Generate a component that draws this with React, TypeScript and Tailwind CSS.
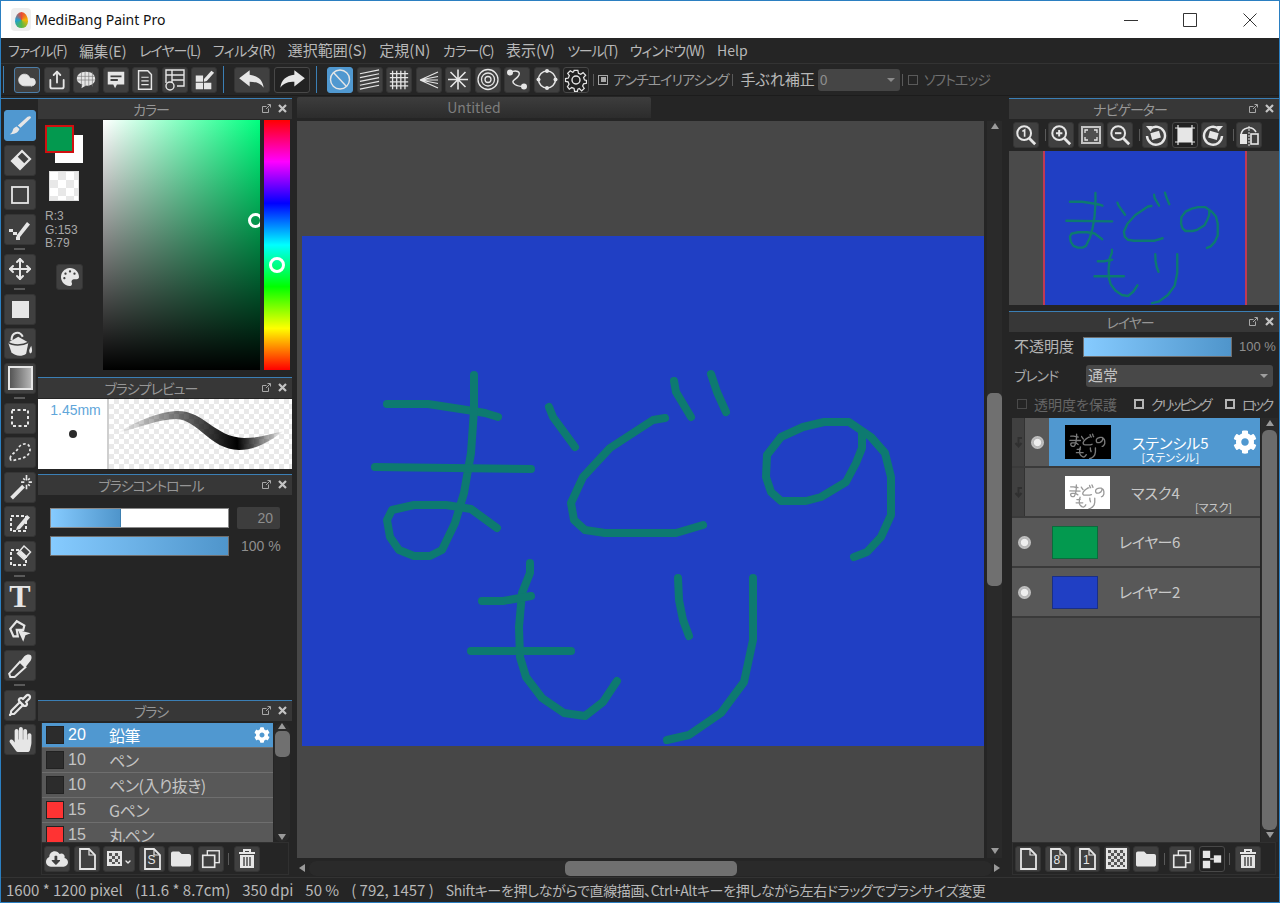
import React from 'react';
import { Cloud, Share, Move, Pipette, ChevronDown } from 'lucide-react';
import { FaHandPaper, FaPalette, FaCog, FaFolder, FaCloudDownloadAlt } from 'react-icons/fa';

const STROKES = [
  'M387 404 L428 404 L467 410 L485 413 L498 417',
  'M474 375 L474 410 L471 453 L464 493 L455 523 L442 550 L430 556 L414 556 L399 550 L390 537 L387 520 L392 510 L414 505 L446 505 L471 509 L497 528',
  'M375 467 L531 469',
  'M549 407 L553 417 L575 447',
  'M665 418 L653 420 L610 448 L583 477 L571 503 L574 520 L585 530 L605 533 L676 533 L703 525',
  'M674 381 L676 392 L691 417',
  'M711 374 L717 392 L726 412',
  'M862 432 L862 448 L856 463 L846 482 L821 497 L806 501 L781 501 L771 492 L766 477 L767 455 L781 437 L803 427 L824 422 L849 422 L871 437 L885 453 L891 477 L891 515 L881 537 L867 552 L854 557',
  'M530 563 L530 573 L522 593 L519 627 L520 657 L526 677 L542 698 L564 713 L585 716 L603 702 L617 681',
  'M482 601 L503 601 L531 596',
  'M471 651 L571 651',
  'M678 578 L679 600 L683 620 L689 636',
  'M753 578 L753 640 L744 682 L721 713 L689 735 L667 740',
];

// the painting on the canvas, reused for the navigator and the layer thumbnails
const Drawing = ({ className, width = 8 }: { className: string; width?: number }) => (
  <svg viewBox="302 236 682 510" preserveAspectRatio="none" className={className} fill="none" stroke="currentColor" strokeWidth={width} strokeLinecap="round" strokeLinejoin="round">
    {STROKES.map((d, i) => <path key={i} d={d} />)}
  </svg>
);

const I = ({ children, size = 20 }: { children: React.ReactNode; size?: number }) => (
  <svg viewBox="0 0 24 24" width={size} height={size} fill="none" stroke="currentColor" strokeWidth={2}>{children}</svg>
);

type Tone = 'normal' | 'active' | 'dark' | 'cloud';

const Btn = ({ children, tone = 'normal', className = 'w-[26px] h-[26px]' }: { children?: React.ReactNode; tone?: Tone; className?: string }) => {
  const tones = {
    normal: 'bg-[#404040] border-[#353535]',
    active: 'bg-[#5098d0] border-[#5098d0]',
    dark: 'bg-[#222222] border-[#484848]',
    cloud: 'bg-[#404040] border-[#4d7ea8]',
  };
  return <div className={`${className} ${tones[tone]} shrink-0 border rounded-[3px] flex items-center justify-center text-[#e6e6e6]`}>{children}</div>;
};

const VSep = ({ className = 'h-[12px] mx-[2px]' }: { className?: string }) => <div className={`${className} w-px shrink-0 bg-[#5a5a5a]`} />;

const PanelTitle = ({ title }: { title: string }) => (
  <div className="relative h-[21px] shrink-0 border-t border-[#3b7fb5] bg-[#373737] pr-[28px] flex items-center justify-center text-[14px] leading-none tracking-[-1px] text-[#969696]">
    {title}
    <div className="absolute right-[5px] top-[5px] flex items-center gap-[7px]">
      <svg viewBox="0 0 9 9" width="9" height="9" fill="none" stroke="#a8a8a8"><path d="M6.5 4.5V8.5H.5V2.5H4.5M4 5L8 1M5.5 .5H8.5V3.5" /></svg>
      <svg viewBox="0 0 9 9" width="9" height="9" fill="none" stroke="#c4c4c4" strokeWidth="2.2"><path d="M1 1L8 8M8 1L1 8" /></svg>
    </div>
  </div>
);

const Pencil = () => <path d="M9 17L19 5l3 2.5L12 19l-4 1z" fill="currentColor" stroke="none" />;
const DashBox = ({ w = 14 }: { w?: number }) => <rect x="3" y="6" width={w} height={w} strokeDasharray="3 2" />;

const TOOLS: (React.ReactNode | null)[] = [
  <I size={26}><path d="M21 3c1 0 1.500 1 .8 1.800L12.500 13.500 10 11.500 19 3.500zM9 12.500l2.500 2.300C10.500 18 7 20 2.500 19.500 5 18.500 5 17 5.500 15.500 6 13.800 7.500 13 9 12.500z" fill="currentColor" stroke="none" /></I>,
  <I size={24}><path d="M14 3l8 8-10 10-8-8z" strokeWidth="2.200" /><path d="M9 8l8 8-5 5-8-8z" fill="currentColor" stroke="none" /></I>,
  <I size={24}><rect x="4" y="4" width="16" height="16" strokeWidth="1.800" /></I>,
  <I size={24}><path d="M9 18L19 5l3 2.500L12 20l-4 1z" fill="currentColor" stroke="none" /><path d="M1 12h4v3H1zM5 15h4v3H5zM8 20h4v3H8z" fill="currentColor" stroke="none" /></I>,
  null,
  <Move size={24} strokeWidth={2} />,
  null,
  <div className="w-[17px] h-[17px] bg-[#e6e6e6]" />,
  <I size={27}><path d="M1 11L10 6 19 11 17 21C13 24 7 23 4 20z" fill="currentColor" stroke="none" /><path d="M1 11C5 14 14 14 19 11" stroke="#404040" strokeWidth="1.300" /><path d="M4 9C4 2 11 0 14 6" strokeWidth="1.800" /><path d="M21.500 14c-1 2-2.500 4-1.500 6s3.500 0 1.500-6z" fill="currentColor" stroke="none" /></I>,
  <div className="w-[25px] h-[24px] border-2 border-[#e6e6e6] bg-[linear-gradient(to_right,#555555,#b5b5b5)]" />,
  null,
  <I size={24}><rect x="4" y="4" width="16" height="16" strokeDasharray="3 2.500" /></I>,
  <I size={26}><path d="M3 17c0-4 5-5 7-9 2-4 6-5 9-4 3 2 3 7 0 10-3 3-7 3-10 4-3 1-6 2-6-1z" strokeDasharray="2.500 2" strokeWidth="1.600" /></I>,
  <I size={26}><path d="M3 21L14 10l2.500 2.500L5.500 23.500z" fill="currentColor" stroke="none" /><path d="M18 1v5M18 10v4M13 7.500h3M20 7.500h3M15 4l1.500 1.500M21 11l-1.500-1.500M21 4l-1.500 1.500" strokeWidth="1.500" /></I>,
  <I size={24}><DashBox w={15} /><Pencil /></I>,
  <I size={24}><DashBox w={15} /><path d="M16 2l6.500 6-6.500 7.500-6.500-6z" fill="#404040" strokeWidth="1.500" /><path d="M13 6.500l6.500 6-3 3-6.500-6z" fill="currentColor" stroke="none" /></I>,
  null,
  <span className="font-['Liberation_Serif',serif] font-bold text-[32px] leading-none">T</span>,
  <I size={26}><path d="M3 10l6-7 7 4-1 4H9l1 6-4 0z" /><path d="M10 11l12 3-5 2-2 6z" fill="currentColor" stroke="none" /></I>,
  <I size={26}><path d="M12 9L16 4C18 2 21 2 22 3s1 4-1 6L17 14z" fill="currentColor" stroke="none" /><path d="M12 9L2 20 3 23 7 23 17 14z" strokeWidth="1.800" /></I>,
  null,
  <Pipette size={24} strokeWidth={2.200} />,
  <FaHandPaper size={25} />,
];

const RULERS: React.ReactNode[] = [
  <I size={25}><circle cx="12" cy="12" r="9.500" strokeWidth="1.400" /><path d="M5.500 5L18.500 19" strokeWidth="1.400" /></I>,
  <I size={23}><path d="M2 6l20-4M2 10l20-4M2 14l20-4M2 18l20-4M2 22l20-4" strokeWidth="1.300" /></I>,
  <I size={22}><path d="M2 5h20M2 9.500h20M2 14h20M2 18.500h20M5 2v20M9.500 2v20M14 2v20M18.500 2v20" strokeWidth="1.400" /></I>,
  <I size={24}><path d="M3 12L21 4M3 12l18-3.500M3 12h18M3 12l18 3.500M3 12l18 8" strokeWidth="1.200" /></I>,
  <I size={25}><path d="M12 2v20M2 12h20M4.500 4.500l15 15M19.500 4.500l-15 15" strokeWidth="1.600" /></I>,
  <I size={25}><circle cx="12" cy="12" r="10" strokeWidth="1.300" /><circle cx="12" cy="12" r="6.500" strokeWidth="1.300" /><circle cx="12" cy="12" r="3" strokeWidth="1.300" /></I>,
  <I size={25}><path d="M5 5c6-3 12-1 8 4-3 4-8 4-3 8 3 2 6 2 9 2" strokeWidth="1.500" /><circle cx="5" cy="5" r="2" fill="currentColor" /><circle cx="19" cy="19" r="2" fill="currentColor" /></I>,
  <I size={25}><circle cx="12" cy="12" r="8.500" strokeWidth="1.500" /><circle cx="12" cy="3.500" r="2" fill="currentColor" stroke="none" /><circle cx="12" cy="20.500" r="2" fill="currentColor" stroke="none" /><circle cx="3.500" cy="12" r="2" fill="currentColor" stroke="none" /><circle cx="20.500" cy="12" r="2" fill="currentColor" stroke="none" /></I>,
  <I size={24}><circle cx="12" cy="12" r="4" strokeWidth="1.400" /><path d="M10 2h4l.6 3 2.400 1 2.500-1.700 2.700 2.700L20 9.500l1 2.500 2 .500v3l-3 .5-1 2.400 1.700 2.500-2.700 2.700L15.500 21l-1.500.6-.5 2.400h-3l-.5-3-2.500-1-2.500 1.700L3 19l1.700-2.500-1-2.500L1 13.500v-3l3-.5 1-2.500L3.300 5 6 2.300 8.500 4l1-.5z" strokeWidth="1.300" transform="scale(.95) translate(.6 .6)" /></I>,
];

const NAV: (React.ReactNode | 'sep')[] = [
  <I size={22}><circle cx="10" cy="10" r="7.500" strokeWidth="2.200" /><path d="M15.500 15.500L22 22" strokeWidth="3" /><path d="M8 8l2.500-1.500V14" strokeWidth="1.800" /></I>,
  'sep',
  <I size={22}><circle cx="10" cy="10" r="7.500" strokeWidth="2.200" /><path d="M15.500 15.500L22 22" strokeWidth="3" /><path d="M6.500 10h7M10 6.500v7" strokeWidth="2.200" /></I>,
  <div className="w-[20px] h-[18px] border-2 border-[#c4c4c4] bg-[#505050] flex items-center justify-center"><svg viewBox="0 0 14 12" width="14" height="12" fill="none" stroke="#e6e6e6" strokeWidth="1.300"><path d="M1 4V1h3M10 1h3v3M1 8v3h3M10 11h3V8" /></svg></div>,
  <I size={22}><circle cx="10" cy="10" r="7.500" strokeWidth="2.200" /><path d="M15.500 15.500L22 22" strokeWidth="3" /><path d="M6.500 10h7" strokeWidth="2.200" /></I>,
  'sep',
  <I size={24}><path d="M7 6a9 9 0 1 1-3 7" strokeWidth="2.400" /><path d="M3 3l6 0-1 6z" fill="currentColor" stroke="none" /><rect x="8" y="9" width="9" height="7" fill="currentColor" stroke="none" transform="rotate(-15 12 12)" /></I>,
  <I size={24}><rect x="5" y="5" width="14" height="14" fill="currentColor" stroke="none" /><path d="M2 5h20M2 19h20M5 2v20M19 2v20" strokeWidth="1.200" /></I>,
  <I size={24}><path d="M17 6a9 9 0 1 0 3 7" strokeWidth="2.400" /><path d="M21 3l-6 0 1 6z" fill="currentColor" stroke="none" /><rect x="7" y="9" width="9" height="7" fill="currentColor" stroke="none" transform="rotate(15 12 12)" /></I>,
  'sep',
  <I size={24}><path d="M4 12a8 8 0 0 1 15-3" strokeWidth="1.600" /><rect x="3" y="11" width="7" height="10" fill="currentColor" stroke="none" /><rect x="14" y="11" width="7" height="10" strokeWidth="1.600" /><path d="M12 3v20" strokeWidth="1" strokeDasharray="2 1" /></I>,
];

const Doc = ({ children }: { children?: React.ReactNode }) => (
  <div className="relative">
    <svg viewBox="0 0 24 24" width="24" height="24" fill="none" stroke="currentColor" strokeWidth="1.800"><path d="M5 2h9l6 6v14H5z" /><path d="M14 2v6h6" strokeWidth="1.200" /></svg>
    {children && <span className="absolute left-[8px] top-[6px] text-[12px] leading-[15px] font-['Liberation_Sans',sans-serif]">{children}</span>}
  </div>
);
const Copy = () => <I size={22}><rect x="8" y="3" width="13" height="13" strokeWidth="1.500" /><rect x="3" y="8" width="13" height="13" fill="#404040" strokeWidth="1.800" /></I>;
const Trash = () => <I size={24}><path d="M4 6h16M9 5V3h6v2" strokeWidth="2" /><path d="M5 8h14v13H5z" fill="currentColor" stroke="none" /><path d="M9 10v9M12 10v9M15 10v9" stroke="#404040" strokeWidth="1.400" /></I>;
const Checks = ({ size = 21 }: { size?: number }) => (
  <div style={{ width: size, height: size }} className="border-2 border-[#e6e6e6] bg-[conic-gradient(#dddddd_25%,#555555_0_50%,#dddddd_0_75%,#555555_0)] bg-[length:6px_6px]" />
);

const Eye = () => <div className="w-[13px] h-[13px] rounded-full bg-[radial-gradient(circle,#eeeeee_35%,#b5b5b5_45%,#d5d5d5_100%)]" />;

const Arrow = ({ dir }: { dir: 'up' | 'down' | 'left' | 'right' }) => {
  const d = { up: 'M4 0L8 6H0z', down: 'M0 0H8L4 6z', left: 'M6 0V8L0 4z', right: 'M0 0L6 4L0 8z' }[dir];
  return <svg viewBox="0 0 8 8" width="8" height="8" fill="#9a9a9a"><path d={d} /></svg>;
};

const BRUSHES = [
  { size: '20', name: '鉛筆', color: 'bg-[#2c2c2c]', active: true },
  { size: '10', name: 'ペン', color: 'bg-[#2c2c2c]' },
  { size: '10', name: 'ペン(入り抜き)', color: 'bg-[#2c2c2c]' },
  { size: '15', name: 'Gペン', color: 'bg-[#ff3333]' },
  { size: '15', name: '丸ペン', color: 'bg-[#ff3333]' },
];

const MENU = [
  { label: 'ファイル(F)', cls: 'tracking-[-1px]' },
  { label: '編集(E)', cls: 'text-[14.5px]' },
  { label: 'レイヤー(L)', cls: 'tracking-[-1px]' },
  { label: 'フィルタ(R)', cls: 'tracking-[-0.5px]' },
  { label: '選択範囲(S)', cls: 'text-[15px]' },
  { label: '定規(N)', cls: 'text-[15px]' },
  { label: 'カラー(C)', cls: 'tracking-[-1.1px]' },
  { label: '表示(V)', cls: 'text-[15px]' },
  { label: 'ツール(T)', cls: 'tracking-[-1.3px]' },
  { label: 'ウィンドウ(W)', cls: 'tracking-[-0.8px]' },
  { label: 'Help', cls: '' },
];
const CHECKER = 'bg-[conic-gradient(#e8e8e8_25%,#ffffff_0_50%,#e8e8e8_0_75%,#ffffff_0)] bg-[length:16px_16px]';
const SLIDER = 'bg-[linear-gradient(to_right,#86cbff,#4f95cb)]';

const ColorPanel = () => (
  <div className="h-[254px] shrink-0 flex bg-[#252525] pt-[1px]">
    <div className="w-[65px] shrink-0 pl-[7px] pt-[5px] flex flex-col">
      <div className="relative h-[38px] w-[38px]">
        <div className="absolute left-[10px] top-[10px] w-[28px] h-[28px] bg-white" />
        <div className="absolute left-0 top-0 w-[29px] h-[28px] bg-[#03994f] border-2 border-[#d01010]" />
      </div>
      <div className={`ml-[4px] mt-[8px] w-[30px] h-[30px] border border-[#dddddd] ${CHECKER} bg-[length:12px_12px]`} />
      <div className="mt-[9px] text-[12px] leading-[13.500px] text-[#a8a8a8] font-['Liberation_Sans',sans-serif]">R:3<br />G:153<br />B:79</div>
      <Btn className="ml-[11px] mt-[13px] w-[27px] h-[26px]"><FaPalette size={18} /></Btn>
    </div>
    <div className="relative w-[157px] h-[250px] shrink-0 overflow-hidden bg-[linear-gradient(to_top,#000000,transparent),linear-gradient(to_right,#ffffff,#00ff7f)]">
      <div className="absolute left-[145px] top-[93px] w-[15px] h-[15px] rounded-full border-[3px] border-white" />
    </div>
    <div className="relative ml-[4px] w-[26px] h-[250px] shrink-0 bg-[linear-gradient(to_bottom,#ff0000,#ff00ff,#0000ff,#00ffff,#00ff00,#ffff00,#ff0000)]">
      <div className="absolute left-[5px] top-[137px] w-[16px] h-[16px] rounded-full border-[3px] border-white" />
    </div>
  </div>
);

const BrushPreview = () => (
  <div className="h-[71px] shrink-0 flex bg-[#252525] pt-px">
    <div className="relative w-[71px] h-[70px] shrink-0 bg-white border-r-2 border-[#cfcfcf] flex flex-col items-center text-[14px] leading-none pt-[4px] pl-[6px] text-[#5fa6da] font-['Liberation_Sans',sans-serif]">
      1.45mm
      <div className="mt-[13px] mr-[5px] w-[8px] h-[8px] rounded-full bg-[#2a2a2a]" />
    </div>
    <div className="flex-1 h-[70px] bg-[conic-gradient(#e9e9e9_25%,#ffffff_0_50%,#e9e9e9_0_75%,#ffffff_0)] bg-[length:10px_10px]">
      <svg viewBox="110 399 182 70" width="182" height="70">
        <defs>
          <linearGradient id="brush" x1="0" x2="1" y1="0" y2="0">
            <stop offset="0" stopColor="#000" stopOpacity="0" />
            <stop offset=".3" stopColor="#000" stopOpacity=".45" />
            <stop offset=".72" stopColor="#000" stopOpacity="1" />
            <stop offset="1" stopColor="#000" stopOpacity="0" />
          </linearGradient>
        </defs>
        <path d="M118 433C140 420 160 412 177 411C205 410 215 437 245 438C260 438 272 434 285 431C272 440 258 450 240 450C210 449 200 420 177 419C160 419 140 428 118 433Z" fill="url(#brush)" />
      </svg>
    </div>
  </div>
);

const BrushControl = () => (
  <div className="flex-1 bg-[#252525] pt-[12px] pl-[12px] flex flex-col">
    <div className="flex items-center h-[22px]">
      <div className="relative w-[179px] h-[20px] bg-white border border-[#8a8a8a]">
        <div className={`w-[70px] h-full ${SLIDER} border-r border-[#3d7fb0]`} />
      </div>
      <div className="ml-[8px] w-[43px] h-[22px] rounded-[2px] bg-[#3d3d3d] flex items-center justify-end pr-[7px] text-[14px] text-[#8e8e8e] font-['Liberation_Sans',sans-serif]">20</div>
    </div>
    <div className="flex items-center h-[20px] mt-[7px]">
      <div className={`w-[179px] h-[20px] border border-[#6f6f6f] ${SLIDER}`} />
      <span className="ml-[12px] text-[14px] text-[#8e8e8e] font-['Liberation_Sans',sans-serif]">100 %</span>
    </div>
  </div>
);

const BrushList = () => (
  <div className="h-[156px] shrink-0 bg-[#252525] flex flex-col">
    <div className="h-[121px] shrink-0 flex pl-[3px] pt-[2px] pr-[2px] overflow-hidden">
      <div className="w-[232px] h-[119px] overflow-hidden border-l border-[#333333] bg-[#4d4d4d]">
        {BRUSHES.map(b => (
          <div key={b.name} className={`h-[25px] flex items-center border-b border-[#6e6e6e] text-[16px] leading-none tracking-[-0.5px] ${b.active ? 'bg-[#5098d0] text-white' : 'bg-[#585858] text-[#c4c4c4]'}`}>
            <div className={`ml-[4px] w-[18px] h-[18px] border border-[#222222] ${b.color}`} />
            <span className="ml-[4px] w-[41px] font-['Liberation_Sans',sans-serif] tracking-normal">{b.size}</span>
            <span>{b.name}</span>
            {b.active && <span className="ml-auto mr-[3px]"><FaCog size={16} /></span>}
          </div>
        ))}
      </div>
      <div className="ml-px w-[16px] flex flex-col items-center justify-between bg-[#2a2a2a] rounded-full">
        <Arrow dir="up" />
        <div className="w-[15px] h-[26px] mb-auto rounded-[5px] bg-[#707070]" />
        <Arrow dir="down" />
      </div>
    </div>
    <div className="h-[33px] shrink-0 mx-[3px] border border-[#303030] flex items-center gap-[3.500px] pl-[2px]">
      <Btn><FaCloudDownloadAlt size={22} /></Btn>
      <Btn><Doc /></Btn>
      <Btn className="w-[32px] h-[26px]">
        <div className="flex items-end gap-[2px]"><Checks size={15} /><ChevronDown size={8} strokeWidth={4} /></div>
      </Btn>
      <Btn><Doc>S</Doc></Btn>
      <Btn><FaFolder size={20} /></Btn>
      <Btn><Copy /></Btn>
      <VSep className="h-[12px] mx-[1px]" />
      <Btn><Trash /></Btn>
    </div>
  </div>
);

const LayerRow = ({ name, sub, thumb, indent, active, gear }: { name: string; sub?: string; thumb: React.ReactNode; indent?: boolean; active?: boolean; gear?: boolean }) => (
  <div className="h-[50px] shrink-0 flex border-b-2 border-[#3a3a3a] bg-[#585858]">
    {indent ? (
      <>
        <div className="w-[13px] shrink-0 bg-[#404040] flex items-center justify-center border-r border-[#333333]">
          <svg viewBox="0 0 9 11" width="9" height="11" fill="none" stroke="#303030" strokeWidth="2"><path d="M8 1H4.500v7M1.500 6l3 3.500 3-3.500" /></svg>
        </div>
        {active ? (
          <div className="w-[24px] shrink-0 flex items-center justify-center"><Eye /></div>
        ) : (
          <div className="w-[24px] shrink-0" />
        )}
        <div className={`flex-1 flex items-center pl-[16px] ${active ? 'bg-[#5098d0]' : ''}`}>
          {thumb}
          <div className={`ml-[21px] pt-[12px] flex flex-col ${active ? 'items-center text-white' : 'text-[#c8c8c8]'} text-[15px] leading-[18px]`}>
            <span>{name}</span>
            {sub && <span className={`text-[11px] leading-[11px] ${active ? '' : 'ml-[64px]'}`}>{sub}</span>}
          </div>
          {gear && <span className="ml-auto mr-[3px] text-white"><FaCog size={24} /></span>}
        </div>
      </>
    ) : (
      <>
        <div className="w-[24px] shrink-0 flex items-center justify-center"><Eye /></div>
        <div className="ml-[16px]">{thumb}</div>
        <span className="ml-[21px] self-center text-[15px] tracking-[-0.5px] text-[#c8c8c8]">{name}</span>
      </>
    )}
  </div>
);

const LayerPanel = () => (
  <div className="flex-1 min-h-0 flex flex-col bg-[#252525]">
    <div className="h-[29px] shrink-0 flex items-center pl-[5px] text-[15px] text-[#b5b5b5]">
      <span className="w-[69px] whitespace-nowrap">不透明度</span>
      <div className={`w-[149px] h-[20px] border border-[#6f6f6f] ${SLIDER}`} />
      <span className="ml-[7px] whitespace-nowrap text-[13px] text-[#8e8e8e] font-['Liberation_Sans',sans-serif]">100 %</span>
    </div>
    <div className="h-[29px] shrink-0 flex items-center pl-[5px] text-[14px] text-[#a8a8a8]">
      <span className="w-[72px] tracking-[-1px]">ブレンド</span>
      <div className="w-[187px] h-[22px] rounded-[3px] bg-[#484848] flex items-center justify-between px-[2px] pr-[5px] text-[15px] text-[#c4c4c4]">
        通常
        <svg viewBox="0 0 8 4" width="8" height="4" fill="#a0a0a0"><path d="M0 0H8L4 4z" /></svg>
      </div>
    </div>
    <div className="h-[28px] shrink-0 flex items-center pl-[8px] text-[14px] text-[#a8a8a8] whitespace-nowrap">
      <div className="w-[10px] h-[10px] border border-[#4a4a4a]" />
      <span className="ml-[7px] w-[100px] text-[#666666]">透明度を保護</span>
      <div className="w-[10px] h-[10px] border-2 border-[#b5b5b5]" />
      <span className="ml-[7px] w-[74px] tracking-[-2.3px]">クリッピング</span>
      <div className="w-[10px] h-[10px] border-2 border-[#b5b5b5]" />
      <span className="ml-[7px] tracking-[-2.5px]">ロック</span>
    </div>
    <div className="flex-1 min-h-0 flex pl-[3px] pr-[1px]">
      <div className="w-[249px] flex flex-col bg-[#4c4c4c]">
        <LayerRow name="ステンシル5" sub="[ステンシル]" indent active gear thumb={<div className="w-[46px] h-[34px] bg-black text-[#7a7a7a]"><Drawing className="w-full h-full" width={20} /></div>} />
        <LayerRow name="マスク4" sub="[マスク]" indent thumb={<div className="w-[45px] h-[33px] bg-white text-[#9a9a9a]"><Drawing className="w-full h-full" width={20} /></div>} />
        <LayerRow name="レイヤー6" thumb={<div className="mt-[8px] w-[46px] h-[33px] bg-[#03994f] border border-[#0b6b3c]" />} />
        <LayerRow name="レイヤー2" thumb={<div className="mt-[8px] w-[46px] h-[33px] bg-[#203fc4] border border-[#1a2f85]" />} />
      </div>
      <div className="ml-[1px] w-[17px] flex flex-col items-center justify-between bg-[#2a2a2a] py-[2px]">
        <Arrow dir="up" />
        <div className="w-[15px] flex-1 my-[2px] rounded-[6px] bg-[#6c6c6c]" />
        <Arrow dir="down" />
      </div>
    </div>
    <div className="h-[33px] shrink-0 mx-[3px] mb-[2px] border border-[#303030] flex items-center gap-[3.500px] pl-[2px]">
      <Btn><Doc /></Btn>
      <Btn><Doc>8</Doc></Btn>
      <Btn><Doc>1</Doc></Btn>
      <Btn><Checks /></Btn>
      <Btn><FaFolder size={20} /></Btn>
      <VSep className="h-[12px] mx-px" />
      <Btn><Copy /></Btn>
      <Btn tone="dark">
        <I size={22}><path d="M2 3h8v8H2zM2 14h8v8H2z" fill="currentColor" stroke="none" /><path d="M14 8h8v8h-8z" fill="currentColor" stroke="none" /><path d="M10 12h4" strokeWidth="1.500" /></I>
      </Btn>
      <VSep className="h-[12px] mx-px" />
      <Btn><Trash /></Btn>
    </div>
  </div>
);

export default function App() {
  return (
    <div className="w-[1280px] h-[903px] overflow-hidden border border-[#2b7fc1] flex flex-col bg-[#252525] font-['Noto_Sans_CJK_JP',sans-serif] [font-feature-settings:'palt']">
      <div className="h-[37px] shrink-0 bg-white flex items-center">
        <div className="ml-[10px] w-[20px] h-[23px] rounded-[4px] bg-[#eeeeee] flex items-center justify-center">
          <div className="w-[13px] h-[16px] rounded-[50%_50%_50%_50%/60%_60%_40%_40%] bg-[conic-gradient(#e94a35,#f4b400,#55b948,#1e9fd4,#e94a35)]" />
        </div>
        <span className="ml-[4px] text-[14px] text-[#111111] font-['Noto_Sans',sans-serif]">MediBang Paint Pro</span>
        <div className="ml-auto flex items-center">
          <svg viewBox="0 0 14 14" width="14" height="14" className="mr-[45px]" fill="none" stroke="#333333"><path d="M0 7.500H14" /></svg>
          <svg viewBox="0 0 14 14" width="14" height="14" className="mr-[46px]" fill="none" stroke="#333333"><path d="M.5 .5H13.500V13.500H.5z" /></svg>
          <svg viewBox="0 0 14 14" width="14" height="14" className="mr-[22px]" fill="none" stroke="#333333"><path d="M.5 .5L13.500 13.500M13.500 .5L.5 13.500" /></svg>
        </div>
      </div>

      <div className="h-[26px] shrink-0 bg-[#252525] border-b border-[#333333] flex items-center pl-[7px] gap-[12.500px] text-[14px] text-[#b8b8b8]">
        {MENU.map(m => <span key={m.label} className={m.cls}>{m.label}</span>)}
      </div>

      <div className="h-[32px] shrink-0 flex items-center pl-[2px] border-b border-[#1c1c1c] text-[14px] text-[#9a9a9a]">
        <div className="w-px h-[27px] bg-[#3b7fb5] mr-[10px]" />
        <div className="flex items-center gap-[3.500px]">
          <Btn tone="cloud"><Cloud size={20} fill="currentColor" strokeWidth={1} /></Btn>
          <Btn><Share size={20} strokeWidth={2.200} /></Btn>
          <Btn><I size={22}><path d="M12 3c6 0 10 3 10 8s-5 8-10 7l-5 3 1-4c-3-1-6-3-6-6 0-5 4-8 10-8z" fill="currentColor" stroke="none" /><path d="M7 3v16M11 3v16M15 3v16M19 3v16M2 8h20M2 12h20" stroke="#777777" strokeWidth=".7" /></I></Btn>
          <Btn><I size={22}><path d="M3 3h18v14h-8l-2 4-2-4H3z" fill="currentColor" stroke="none" /><path d="M6 8h12M6 12h8" stroke="#404040" /></I></Btn>
          <Btn><I size={22}><path d="M5 2h10l4 4v16H5z" strokeWidth="1.600" /><path d="M8 9h8M8 13h8M8 17h8" strokeWidth="1.300" /></I></Btn>
          <Btn><I size={24}><path d="M3 15V2h18v16h-7M3 7h18M9 2v13M9 12h12" strokeWidth="1.400" /><circle cx="7" cy="18" r="4" strokeWidth="1.400" /></I></Btn>
          <Btn><I size={22}><path d="M3 7h8v7H3zM3 15h8v7H3zM12 15h8v7h-8z" fill="currentColor" stroke="none" /><path d="M12 11L20 2l3 2-8 9-3 1z" fill="currentColor" stroke="none" /></I></Btn>
        </div>
        <div className="w-px h-[27px] bg-[#3b7fb5] mx-[5px] ml-[6px]" />
        <div className="ml-[5px] flex items-center gap-[4px]">
          <Btn className="w-[36px] h-[26px]"><svg viewBox="0 0 24 18" width="28" height="21" fill="currentColor"><path d="M10 1L1 8l9 7v-4c5 0 9 1 12 5-1-7-5-10-12-11z" /></svg></Btn>
          <Btn tone="dark" className="w-[36px] h-[26px]"><svg viewBox="0 0 24 18" width="28" height="21" fill="currentColor"><path d="M14 1l9 7-9 7v-4c-5 0-9 1-12 5 1-7 5-10 12-11z" /></svg></Btn>
        </div>
        <div className="w-px h-[27px] bg-[#3b7fb5] ml-[6px] mr-[10px]" />
        <div className="flex items-center gap-[3.500px]">
          {RULERS.map((r, i) => <Btn key={i} tone={i === 0 ? 'active' : i === 8 ? 'dark' : 'normal'}>{r}</Btn>)}
        </div>
        <VSep className="h-[12px] ml-[4px] mr-[4px]" />
        <div className="w-[10px] h-[10px] border border-[#a8a8a8] p-[1.500px]"><div className="w-full h-full bg-[#a8a8a8]" /></div>
        <span className="ml-[5px] tracking-[-1px]">アンチエイリアシング</span>
        <VSep className="h-[12px] ml-[4px] mr-[7px]" />
        <span className="text-[15px] text-[#b8b8b8]">手ぶれ補正</span>
        <div className="ml-[3px] w-[82px] h-[22px] rounded-[3px] bg-[#454545] flex items-center justify-between pl-[2px] pr-[5px] text-[#8e8e8e]">
          0
          <svg viewBox="0 0 8 4" width="8" height="4" fill="#8a8a8a"><path d="M0 0H8L4 4z" /></svg>
        </div>
        <VSep className="h-[12px] mx-[2px]" />
        <div className="ml-[3px] w-[10px] h-[10px] border border-[#5a5a5a]" />
        <span className="ml-[6px] tracking-[-1px] text-[#707070]">ソフトエッジ</span>
      </div>

      <div className="flex-1 min-h-0 flex">
        <div className="w-[37px] shrink-0 mt-[2px] flex flex-col items-start pl-[3px] pt-[11px] gap-[3.500px] border-t border-[#3b7fb5]">
          {TOOLS.map((t, i) => t === null
            ? <div key={i} className="ml-[10px] w-[11px] h-[2px] bg-[#5a5a5a]" />
            : <Btn key={i} tone={i === 0 ? 'active' : 'normal'} className="w-[32px] h-[31px]">{t}</Btn>)}
        </div>

        <div className="w-[254px] shrink-0 pt-[2px] flex flex-col">
          <PanelTitle title="カラー" />
          <ColorPanel />
          <div className="h-[4px] shrink-0" />
          <PanelTitle title="ブラシプレビュー" />
          <BrushPreview />
          <div className="h-[5px] shrink-0" />
          <PanelTitle title="ブラシコントロール" />
          <BrushControl />
          <PanelTitle title="ブラシ" />
          <BrushList />
        </div>

        <div className="w-[712px] shrink-0 ml-[5px] flex flex-col">
          <div className="h-[25px] shrink-0 pt-px">
            <div className="w-[354px] h-[21px] rounded-t-[2px] bg-[linear-gradient(to_bottom,#3d3d3d,#2c2c2c)] flex items-center justify-center text-[14px] text-[#7e7e7e]">Untitled</div>
          </div>
          <div className="flex-1 min-h-0 flex">
            <div className="w-[687px] shrink-0 bg-[#474747] flex flex-col justify-center items-end">
              <div className="w-[682px] h-[510px] mb-[-3px] bg-[#203fc4] text-[#0d7a70]">
                <Drawing className="w-full h-full" />
              </div>
            </div>
            <div className="ml-[3px] w-[15px] bg-[#2a2a2a] flex flex-col items-center py-[2px]">
              <Arrow dir="up" />
              <div className="w-full h-[262px] shrink-0" />
              <div className="w-full h-[193px] shrink-0 rounded-[5px] bg-[#707070]" />
              <div className="flex-1" />
              <Arrow dir="down" />
            </div>
          </div>
          <div className="h-[18px] shrink-0 mt-px flex items-center pl-[2px] pr-[7px]">
            <Arrow dir="left" />
            <div className="relative flex-1 h-[15px] mx-[2px] rounded-full bg-[#2a2a2a]">
              <div className="absolute left-[256px] top-0 w-[172px] h-[15px] rounded-[5px] bg-[#707070]" />
            </div>
            <Arrow dir="right" />
          </div>
        </div>

        <div className="w-[270px] shrink-0 flex flex-col pt-[2px]">
          <PanelTitle title="ナビゲーター" />
          <div className="h-[32px] shrink-0 flex items-center pl-[4px] bg-[#252525]">
            {NAV.map((n, i) => n === 'sep'
              ? <VSep key={i} className="h-[12px] ml-[2px] mr-[2.500px]" />
              : <Btn key={i} tone={i === 7 ? 'dark' : 'normal'} className="w-[26px] h-[26px] mr-[3.500px] last:mr-0">{n}</Btn>)}
          </div>
          <div className="h-[154px] shrink-0 bg-[#4a4a4a] flex justify-center pl-[1px]">
            <div className="w-[204px] h-full bg-[#203fc4] border-x-2 border-[#c03a55] text-[#0d7a70]">
              <Drawing className="w-full h-full" width={8} />
            </div>
          </div>
          <div className="h-[6px] shrink-0" />
          <PanelTitle title="レイヤー" />
          <LayerPanel />
        </div>
      </div>

      <div className="h-[25px] shrink-0 border-t border-[#333333] flex items-center pl-[5px] gap-[12px] text-[15px] text-[#b8b8b8] whitespace-nowrap">
        <span>1600 * 1200 pixel</span>
        <span>(11.6 * 8.7cm)</span>
        <span>350 dpi</span>
        <span>50 %</span>
        <span>( 792, 1457 )</span>
        <span className="text-[14px] tracking-[-0.33px]">Shiftキーを押しながらで直線描画、Ctrl+Altキーを押しながら左右ドラッグでブラシサイズ変更</span>
      </div>
    </div>
  );
}
